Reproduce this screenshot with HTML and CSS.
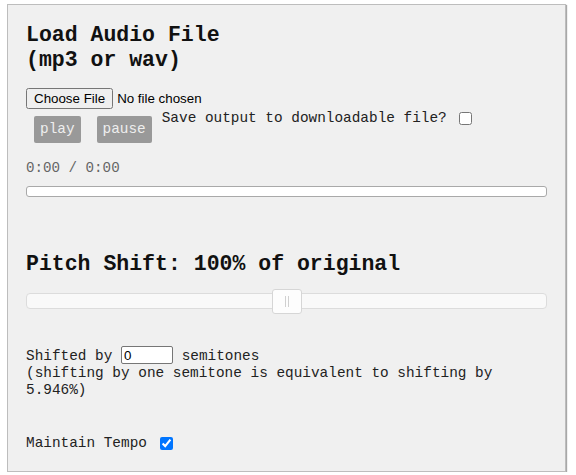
FILE: index.html
```html
<!DOCTYPE html>
<html>
<head>
<meta charset="utf-8">
<link rel="stylesheet" href="styles.css">
</head>
<body>
<div class="panel">
  <h2 class="title">Load Audio File<br>(mp3 or wav)</h2>
  <div class="file-row"><input type="file" class="file"></div>
  <div class="controls">
    <button class="btn">play</button>
    <button class="btn">pause</button>
    <label class="save">Save output to downloadable file? <input type="checkbox" class="check"></label>
  </div>
  <div class="time">0:00 / 0:00</div>
  <div class="progress"></div>
  <h2 class="title pitch">Pitch Shift: 100% of original</h2>
  <div class="slider"><span class="thumb"><span class="grip"></span></span></div>
  <p class="shift">Shifted by <input class="semi" type="text" value="0"> semitones<br>(shifting by one semitone is equivalent to shifting by<br>5.946%)</p>
  <p class="tempo">Maintain Tempo <input type="checkbox" class="check" checked></p>
</div>
</body>
</html>
```
FILE: styles.css
```css
html, body {
  margin: 0;
  padding: 0;
  background: #ffffff;
}
body {
  font-family: "Liberation Mono", "Courier New", monospace;
  font-size: 14.4px;
  line-height: 17px;
  color: #222;
}
.panel {
  margin: 4px 0 0 7px;
  width: 521px;
  padding: 18px 18px 18px 18px;
  background: #f0f0f0;
  border: 1px solid #bdbdbd;
  box-shadow: 1px 1px 1px #a8a8a8;
}
.title {
  margin: 0 0 15px 0;
  font-size: 21.5px;
  line-height: 25px;
  font-weight: bold;
  color: #111;
}
.file-row {
  height: 20px;
}
.file {
  font-family: "Liberation Sans", Arial, sans-serif;
  font-size: 13.33px;
  margin: 0;
  color: #000;
}
.controls {
  display: flex;
  align-items: flex-start;
}
.btn {
  margin: 8px;
  padding: 5px 6px;
  border: none;
  border-radius: 2px;
  background: #999999;
  color: #eeeeee;
  font-family: "Liberation Mono", "Courier New", monospace;
  font-size: 14.4px;
  line-height: 17px;
}
.save {
  margin-top: 1px;
  margin-left: 2px;
}
.check {
  vertical-align: -3px;
  margin: 3px 3px 3px 4px;
}
.time {
  margin-top: 9px;
  color: #666;
  font-size: 14.2px;
}
.progress {
  margin-top: 9px;
  height: 9px;
  background: #ffffff;
  border: 1px solid #a9a9a9;
  border-radius: 3px;
}
.pitch {
  margin: 55px 0 16px 0;
}
.slider {
  position: relative;
  height: 14px;
  background: #f9f9f9;
  border: 1px solid #dcdcdc;
  border-radius: 4px;
}
.thumb {
  position: absolute;
  left: 245px;
  top: -5px;
  width: 28px;
  height: 23px;
  background: #fdfdfd;
  border: 1px solid #d6d6d6;
  border-radius: 3px;
  display: flex;
  justify-content: center;
  align-items: center;
}
.grip {
  width: 2px;
  height: 11px;
  border-left: 1px solid #d0d0d0;
  border-right: 1px solid #d0d0d0;
}
.shift {
  margin: 37px 0 0 0;
}
.semi {
  width: 52px;
  height: 18px;
  box-sizing: border-box;
  padding: 1px 2px;
  border: 1px solid #767676;
  border-radius: 2px;
  font-family: "Liberation Sans", Arial, sans-serif;
  font-size: 13.33px;
  background: #fff;
  margin: 0;
}
.tempo {
  margin: 35px 0 0 0;
}
```
